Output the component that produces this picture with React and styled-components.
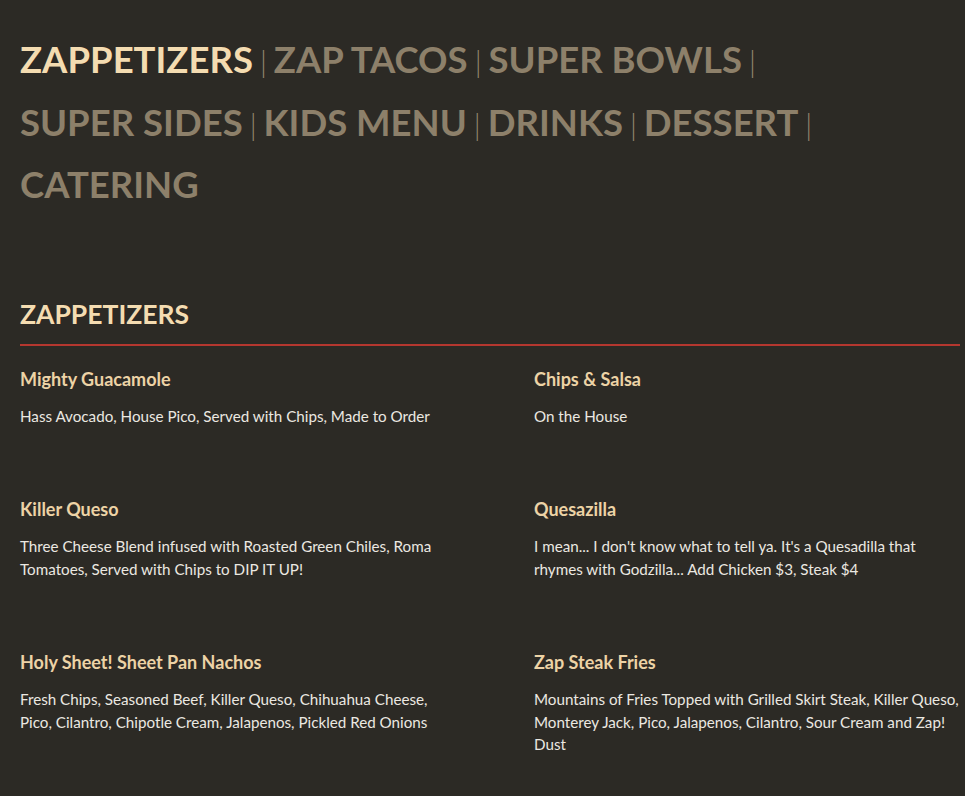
import React from "react";
import styled, { createGlobalStyle } from "styled-components";

const GlobalStyle = createGlobalStyle`
  html, body {
    margin: 0;
    padding: 0;
    background: #2c2a25;
  }
  body {
    font-family: "Lato", "Noto Sans", sans-serif;
    color: #e9e6df;
  }
`;

const Page = styled.div`
  padding: 28px 5px 40px 20px;
`;

const Nav = styled.nav`
  display: flex;
  flex-wrap: wrap;
  align-items: baseline;
  max-width: 820px;
  line-height: 62.5px;
`;

const NavItem = styled.a`
  font-size: 36.5px;
  font-weight: 700;
  color: ${(props) => (props.active ? "#f4dcb1" : "#8d806a")};
  text-decoration: none;
  white-space: nowrap;
`;

const Sep = styled.span`
  font-size: 29px;
  line-height: 1;
  font-weight: 300;
  color: #938670;
  margin: 0 7px;
`;

const Section = styled.section`
  margin-top: 83px;
`;

const SectionTitle = styled.h2`
  margin: 0;
  font-size: 26.5px;
  line-height: 31px;
  font-weight: 700;
  color: #f4dcb1;
  padding-bottom: 14px;
  border-bottom: 2px solid #b5372f;
`;

const Grid = styled.div`
  display: grid;
  grid-template-columns: 426px 426px;
  column-gap: 88px;
  padding-top: 20px;
`;

const Item = styled.div`
  margin-bottom: 69px;
`;

const ItemName = styled.h3`
  margin: 0 0 12px;
  font-size: 18px;
  line-height: 27px;
  font-weight: 700;
  color: #edd3a6;
`;

const ItemDesc = styled.p`
  margin: 0;
  font-size: 15.2px;
  line-height: 22.5px;
  color: #ebe8e1;
`;

const tabs = [
  "ZAPPETIZERS",
  "ZAP TACOS",
  "SUPER BOWLS",
  "SUPER SIDES",
  "KIDS MENU",
  "DRINKS",
  "DESSERT",
  "CATERING",
];

const items = [
  {
    name: "Mighty Guacamole",
    desc: "Hass Avocado, House Pico, Served with Chips, Made to Order",
  },
  { name: "Chips & Salsa", desc: "On the House" },
  {
    name: "Killer Queso",
    desc: "Three Cheese Blend infused with Roasted Green Chiles, Roma Tomatoes, Served with Chips to DIP IT UP!",
  },
  {
    name: "Quesazilla",
    desc: "I mean... I don't know what to tell ya. It's a Quesadilla that rhymes with Godzilla... Add Chicken $3, Steak $4",
  },
  {
    name: "Holy Sheet! Sheet Pan Nachos",
    desc: "Fresh Chips, Seasoned Beef, Killer Queso, Chihuahua Cheese, Pico, Cilantro, Chipotle Cream, Jalapenos, Pickled Red Onions",
  },
  {
    name: "Zap Steak Fries",
    desc: "Mountains of Fries Topped with Grilled Skirt Steak, Killer Queso, Monterey Jack, Pico, Jalapenos, Cilantro, Sour Cream and Zap! Dust",
  },
];

export default function App() {
  return (
    <Page>
      <GlobalStyle />
      <Nav>
        {tabs.map((t, i) => (
          <React.Fragment key={t}>
            <NavItem href="#" active={i === 0 ? 1 : 0}>
              {t}
            </NavItem>
            {i < tabs.length - 1 && <Sep>|</Sep>}
          </React.Fragment>
        ))}
      </Nav>
      <Section>
        <SectionTitle>ZAPPETIZERS</SectionTitle>
        <Grid>
          {items.map((it) => (
            <Item key={it.name}>
              <ItemName>{it.name}</ItemName>
              <ItemDesc>{it.desc}</ItemDesc>
            </Item>
          ))}
        </Grid>
      </Section>
    </Page>
  );
}
